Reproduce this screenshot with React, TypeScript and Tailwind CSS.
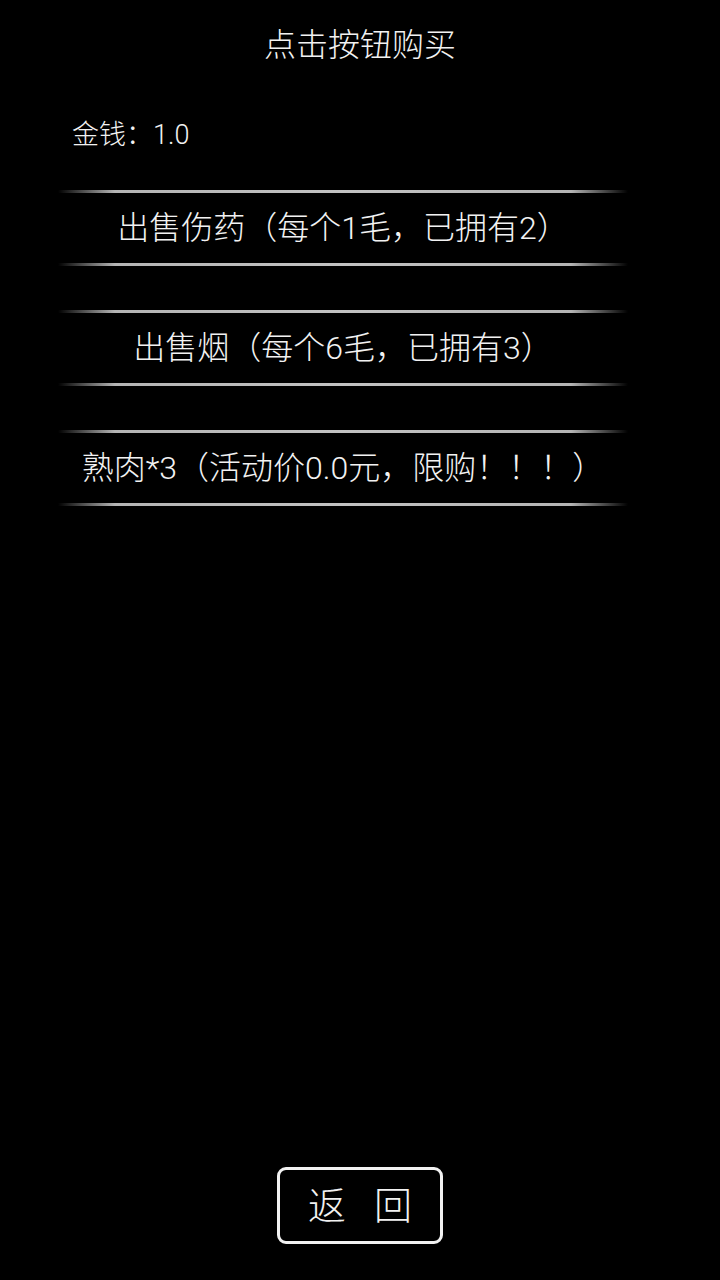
const items = [
  '出售伤药（每个1毛，已拥有2）',
  '出售烟（每个6毛，已拥有3）',
  '熟肉*3（活动价0.0元，限购！！！）',
];

// keep full-width brackets and colons at a full em, the way a phone renders them
function Wide({ text }: { text: string }) {
  return (
    <>
      {text.split(/([（）：])/).map((part, i) => {
        if (part === '（') return <span key={i} className="inline-block w-[1em] text-right">（</span>;
        if (part === '）') return <span key={i} className="inline-block w-[1em] text-left">）</span>;
        if (part === '：') return <span key={i} className="inline-block w-[1em] text-center">：</span>;
        return <span key={i}>{part}</span>;
      })}
    </>
  );
}

// thin glowing divider that fades out at both ends
function Rule() {
  return (
    <div className="h-[3px] w-full bg-[linear-gradient(to_right,transparent,#c8c8c8_10%,#d8d8d8_50%,#c8c8c8_90%,transparent)] opacity-90" />
  );
}

function ShopButton({ label }: { label: string }) {
  return (
    <button className="flex h-[76px] w-[570px] flex-col text-[#f2f2f2]">
      <Rule />
      <span className="flex flex-1 items-center justify-center text-[32px] leading-none">
        <Wide text={label} />
      </span>
      <Rule />
    </button>
  );
}

export default function App() {
  return (
    <div
      className="flex h-[1280px] w-[720px] flex-col bg-black font-light text-[#f2f2f2]"
      style={{ fontFamily: 'Roboto, "Noto Sans CJK SC", sans-serif' }}
    >
      <div className="flex h-[90px] items-center justify-center text-[32px] leading-none">点击按钮购买</div>
      <div className="flex h-[86px] items-center pt-[4px] pl-[72px] text-[27px] leading-none">
        <Wide text="金钱：1.0" />
      </div>

      <div className="mt-[14px] flex flex-col gap-[44px] pl-[58px]">
        {items.map((label) => (
          <ShopButton key={label} label={label} />
        ))}
      </div>

      <div className="mt-auto mb-[36px] flex justify-center">
        <button className="flex h-[77px] w-[166px] items-center justify-center gap-[28px] rounded-[9px] border-[3px] border-[#f2f2f2] text-[38px] leading-none">
          <span>返</span>
          <span>回</span>
        </button>
      </div>
    </div>
  );
}
